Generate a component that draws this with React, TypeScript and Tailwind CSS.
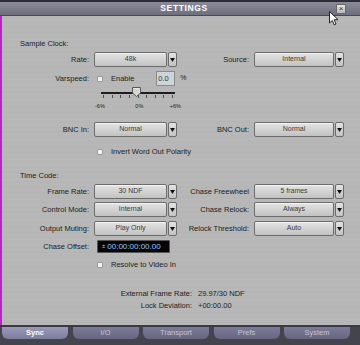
const font = "font-['Liberation_Sans',Arial,sans-serif]";

function Select({ value, right }: { value: string; right?: boolean }) {
  return (
    <div className={right ? "flex h-[15px] w-[90px] gap-px" : "flex h-[15px] w-[83px] gap-px"}>
      <div className="flex flex-1 items-center justify-center rounded-[2px] border border-[#6c6c6c] bg-gradient-to-b from-[#e4e4e4] to-[#c2c2c2] text-[7px] text-[#3a3a3a] shadow-[inset_0_1px_0_#f4f4f4]">
        {value}
      </div>
      <div className="flex w-[9px] items-center justify-center rounded-[2px] border border-[#6c6c6c] bg-gradient-to-b from-[#e4e4e4] to-[#c2c2c2]">
        <svg width="5" height="4" viewBox="0 0 5 4">
          <path d="M0 0H5L2.5 4Z" fill="#111" />
        </svg>
      </div>
    </div>
  );
}

function Check() {
  return <div className="h-[6px] w-[6px] rounded-[1px] border border-[#9a9a9a] bg-[#f2f2f2]" />;
}

function Row({ label, value, rLabel, rValue }: { label: string; value: string; rLabel?: string; rValue?: string }) {
  return (
    <div className="flex h-[15px] items-center">
      <div className="w-[87px] text-right">{label}</div>
      <div className="ml-[5px]">
        <Select value={value} />
      </div>
      {rLabel && (
        <>
          <div className="w-[72px] text-right">{rLabel}</div>
          <div className="ml-[5px]">
            <Select value={rValue ?? ""} right />
          </div>
        </>
      )}
    </div>
  );
}

function Slider() {
  const ticks = [0, 1, 2, 3, 4, 5, 6, 7, 8];
  return (
    <div className="relative ml-[99px] h-[24px] w-[74px]">
      <div className="absolute left-0 right-0 top-[6px] h-[2px] bg-[#1e1e1e]" />
      <div className="absolute left-[2px] right-[2px] top-[9px] flex justify-between">
        {ticks.map((t) => (
          <div key={t} className="h-[3px] w-px bg-[#4a4a4a]" />
        ))}
      </div>
      <svg className="absolute left-[31px] top-[1px]" width="9" height="10" viewBox="0 0 9 10">
        <path d="M0.5 0.5H8.5V6L4.5 9.5L0.5 6Z" fill="#d2d2d2" stroke="#5a5a5a" />
        <path d="M2 1.5H7V5.5L4.5 8" fill="none" stroke="#efefef" strokeWidth="0.8" />
      </svg>
      <div className="absolute left-[-6px] right-[-6px] top-[16px] flex justify-between text-[5.5px] text-[#222]">
        <span>-6%</span>
        <span className="ml-[4px]">0%</span>
        <span>+6%</span>
      </div>
    </div>
  );
}

export default function App() {
  const tabs = ["Sync", "I/O", "Transport", "Prefs", "System"];
  return (
    <div className={`relative flex h-[345px] w-[360px] flex-col overflow-hidden bg-[#b6b6b6] ${font} text-[7.5px] text-[#1c1c1c]`}>
      {/* title bar */}
      <div className="flex h-[16px] items-center justify-center border-t-[2px] border-b border-t-[#2c2c36] border-b-[#4a4a55] bg-gradient-to-b from-[#8a8a98] to-[#6e6e7c]">
        <span className="ml-[8px] text-[8.5px] font-bold tracking-[0.6px] text-white">SETTINGS</span>
      </div>
      <div className="absolute right-[14px] top-[4px] flex h-[10px] w-[10px] items-center justify-center rounded-[1px] border border-[#666] bg-gradient-to-b from-[#e6e6e6] to-[#b8b8b8] text-[8px] leading-none text-[#333]">
        ×
      </div>

      <div className="flex flex-1 flex-col border-l-2 border-[#b624c4] bg-[repeating-linear-gradient(180deg,#b8b8b8_0px,#b4b4b4_2px,#bababa_3px,#b5b5b5_5px)]">
        <div className="ml-[18px] mt-[23px] flex h-[10px] items-center">Sample Clock:</div>
        <div className="mt-[3px]">
          <Row label="Rate:" value="48k" rLabel="Source:" rValue="Internal" />
        </div>
        <div className="mt-[4px] flex h-[15px] items-center">
          <div className="w-[87px] text-right">Varspeed:</div>
          <div className="ml-[8px]">
            <Check />
          </div>
          <span className="ml-[8px]">Enable</span>
          <div className="ml-[22px] flex h-[15px] w-[19px] items-center border border-[#8a8a8a] bg-[#cdd5d9] pl-[1px] text-[7.5px] text-[#333]">
            0.0
          </div>
          <span className="ml-[5px] text-[7px]">%</span>
        </div>
        <Slider />
        <div className="mt-[12px]">
          <Row label="BNC In:" value="Normal" rLabel="BNC Out:" rValue="Normal" />
        </div>
        <div className="mt-[10px] flex h-[10px] items-center">
          <div className="ml-[95px]">
            <Check />
          </div>
          <span className="ml-[8px]">Invert Word Out Polarity</span>
        </div>

        <div className="ml-[18px] mt-[14px] flex h-[10px] items-center">Time Code:</div>
        <div className="mt-[3px]">
          <Row label="Frame Rate:" value="30 NDF" rLabel="Chase Freewheel" rValue="5 frames" />
        </div>
        <div className="mt-[3px]">
          <Row label="Control Mode:" value="Internal" rLabel="Chase Relock:" rValue="Always" />
        </div>
        <div className="mt-[4px]">
          <Row label="Output Muting:" value="Play Only" rLabel="Relock Threshold:" rValue="Auto" />
        </div>
        <div className="mt-[4px] flex h-[13px] items-center">
          <div className="w-[87px] text-right">Chase Offset:</div>
          <div className="ml-[8px] flex h-[13px] w-[73px] items-center gap-[2px] rounded-[1px] border border-[#555] bg-[#050505] pl-[4px] text-[8px] text-[#9cc8ff]">
            <span className="text-[6px]">±</span>
            <span>00:00:00:00.00</span>
          </div>
        </div>
        <div className="mt-[7px] flex h-[10px] items-center">
          <div className="ml-[95px]">
            <Check />
          </div>
          <span className="ml-[8px]">Resolve to Video In</span>
        </div>

        <div className="mt-[19px] flex h-[10px] items-center">
          <div className="w-[190px] text-right">External Frame Rate:</div>
          <span className="ml-[6px]">29.97/30 NDF</span>
        </div>
        <div className="mt-[2px] flex h-[10px] items-center">
          <div className="w-[190px] text-right">Lock Deviation:</div>
          <span className="ml-[6px]">+00:00.00</span>
        </div>
      </div>

      {/* tab bar */}
      <div className="flex h-[20px] gap-[4.5px] border-t-2 border-[#3a3a46] bg-[#44444f] pb-[6px] pl-[2px]">
        {tabs.map((t, i) => (
          <div
            key={t}
            className={
              i === 0
                ? "flex h-[12px] w-[66px] items-center justify-center rounded-b-[6px] bg-gradient-to-b from-[#9a9ab8] to-[#7c7c9c] text-[7.5px] font-bold text-white"
                : "flex h-[12px] w-[66px] items-center justify-center rounded-b-[6px] bg-gradient-to-b from-[#7c7c98] to-[#666682] text-[7.5px] text-[#c4c4d6]"
            }
          >
            {t}
          </div>
        ))}
      </div>

      {/* mouse cursor */}
      <svg className="absolute left-[329px] top-[11px]" width="10" height="15" viewBox="0 0 10 15">
        <path d="M0.5 0.5V12L3.3 9.4L5.2 13.8L7 13L5.1 8.7H9Z" fill="#fff" stroke="#111" strokeWidth="0.9" strokeLinejoin="round" />
      </svg>
    </div>
  );
}
